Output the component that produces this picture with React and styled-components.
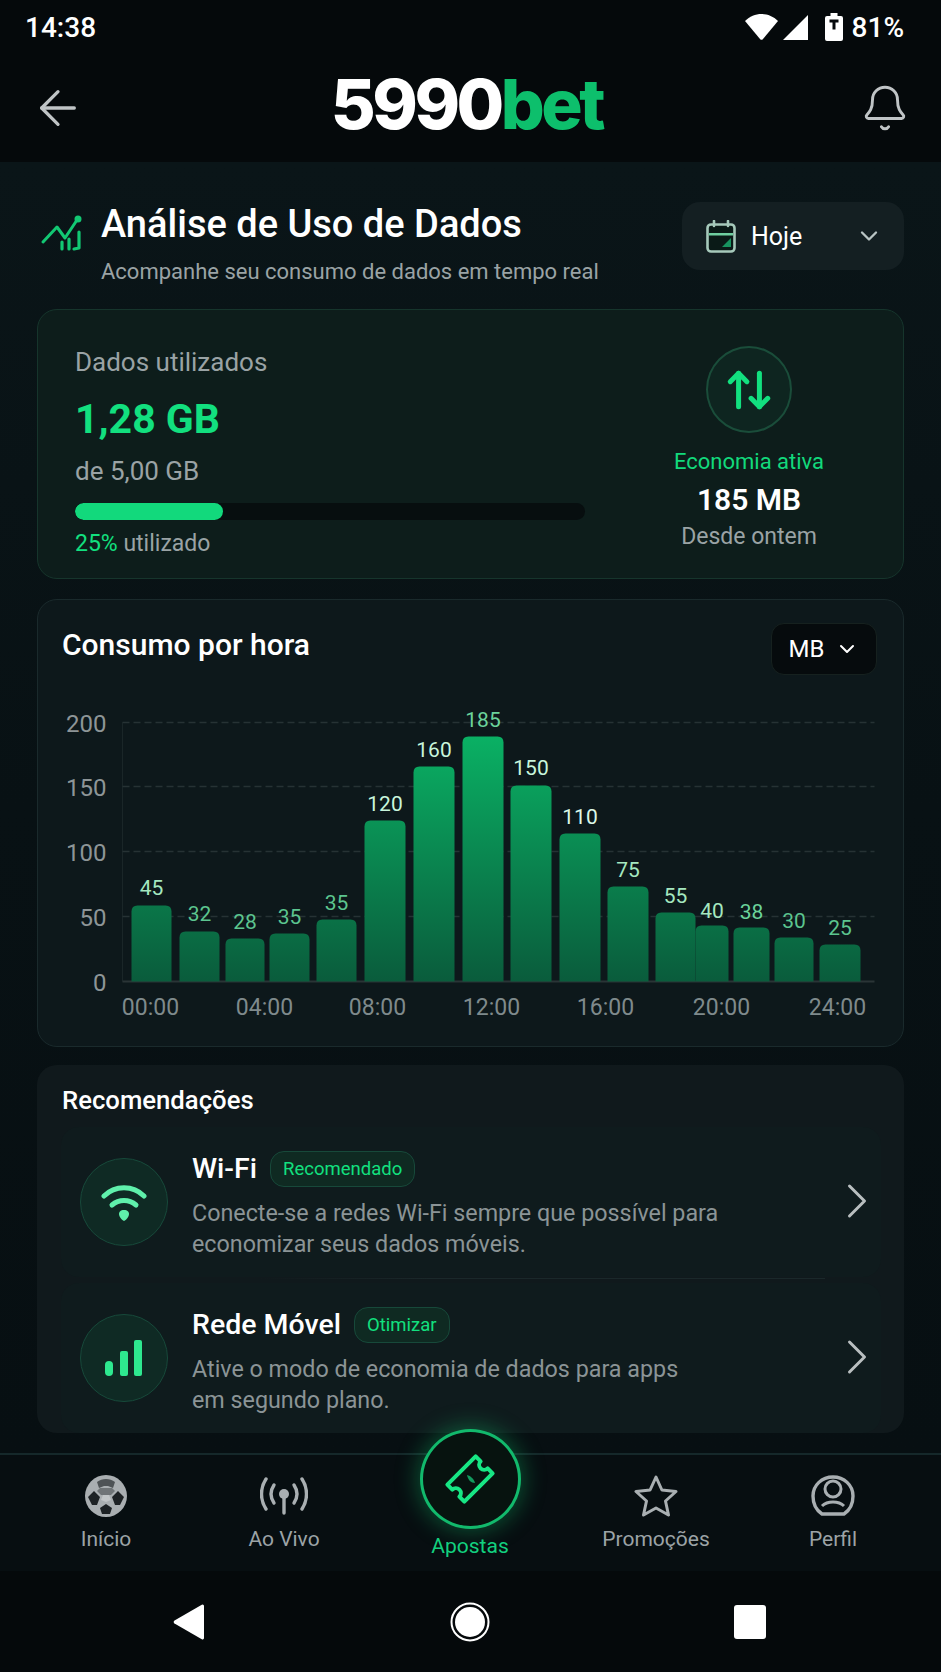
import React from 'react';
import styled, { createGlobalStyle } from 'styled-components';
import { ChevronDown, ChevronRight, ArrowLeft, Bell, ArrowUpDown } from 'lucide-react';

const Global = createGlobalStyle`
  html, body { margin: 0; padding: 0; background: #05090b; }
  * { box-sizing: border-box; }
  #root { width: 941px; height: 1672px; overflow: hidden; }
`;

const Screen = styled.div`
  width: 941px; height: 1672px; display: flex; flex-direction: column;
  font-family: Roboto, "Liberation Sans", sans-serif; color: #fff; background: #05090b;
`;
const StatusBar = styled.div`
  flex: none; height: 54px; display: flex; align-items: center; justify-content: space-between;
  padding: 0 37px 0 25px; font-size: 28px; font-weight: 500; color: #fff; background: #05090b;
`;
const StatusIcons = styled.div`display: flex; align-items: center;`;
const StatusSlot = styled.span`display: flex; margin-right: ${p => p.$mr}px;`;
const AppBar = styled.div`
  flex: none; height: 108px; display: flex; align-items: center; justify-content: space-between;
  padding: 0 31px 0 30px; background: #05090b;
`;
const Logo = styled.div`
  font-family: Inter, sans-serif; font-weight: 800; font-size: 69px; letter-spacing: -3.5px; line-height: 1; color: #fff;
  margin: -8px 13px 0 0;
`;
const LogoAccent = styled.span`color: #0dbf6c;`;
const Content = styled.main`
  flex: none; height: 1291px; padding: 0 37px; display: flex; flex-direction: column;
  background: linear-gradient(180deg, #0a1518 0%, #081114 50%, #070f12 100%);
`;
const PageHead = styled.div`
  flex: none; height: 147px; display: flex; justify-content: space-between; padding-top: 40px;
`;
const HeadLeft = styled.div`display: flex; gap: 17px; margin-left: 3px;`;
const TrendSlot = styled.span`display: block; margin-top: 13px;`;
const PageTitle = styled.h1`margin: 0; font-size: 38px; font-weight: 500; line-height: 44px;`;
const PageSub = styled.p`margin: 11px 0 0; font-size: 22px; line-height: 30px; color: #9aa3a5;`;
const PeriodSelect = styled.div`
  width: 222px; height: 68px; background: #141f22; border-radius: 18px; display: flex; align-items: center;
  padding: 0 21px 0 24px; font-size: 25px; gap: 15px;
`;
const Spacer = styled.span`flex: 1;`;
const UsageCard = styled.section`
  flex: none; height: 270px; border: 1.5px solid #16352c; border-radius: 20px; background: #0d1d1b;
  display: flex; padding: 32px 38px 0 37px; margin-bottom: 20px;
`;
const UsageLeft = styled.div`width: 510px; display: flex; flex-direction: column;`;
const UsageLabel = styled.div`font-size: 26px; line-height: 40px; color: #9aa3a5;`;
const UsageValue = styled.div`font-size: 41px; font-weight: 700; line-height: 50px; color: #12e07f; margin-top: 12px;`;
const UsageOf = styled.div`font-size: 26px; line-height: 34px; color: #9aa3a5; margin-top: 10px;`;
const Track = styled.div`height: 17px; border-radius: 9px; background: #070e0f; margin-top: 15px; overflow: hidden;`;
const Fill = styled.div`height: 100%; border-radius: 9px; background: #12d97c;`;
const UsagePct = styled.div`font-size: 23px; line-height: 30px; color: #9aa3a5; margin-top: 9px;`;
const Green = styled.span`color: #12e07f;`;
const UsageRight = styled.div`flex: 1; display: flex; flex-direction: column; align-items: center; padding-left: 48px; margin-top: 4px;`;
const SaveCircle = styled.div`
  width: 86px; height: 87px; border-radius: 50%; border: 2px solid #1a4d3a; background: #0e2520; display: flex; align-items: center; justify-content: center; color: #12e07f;
`;
const SaveLabel = styled.div`font-size: 22px; line-height: 30px; color: #12d97c; margin-top: 14px; white-space: nowrap;`;
const SaveValue = styled.div`font-size: 30px; font-weight: 600; line-height: 34px; color: #fff; margin-top: 6px; white-space: nowrap;`;
const SaveNote = styled.div`font-size: 23px; line-height: 30px; color: #9aa3a5; margin-top: 5px; white-space: nowrap;`;

const ChartCard = styled.section`
  flex: none; height: 448px; border: 1.5px solid #1a2a2c; border-radius: 20px; background: #0d181b; margin-bottom: 18px;
  display: flex; flex-direction: column;
`;
const ChartHead = styled.div`
  flex: none; display: flex; justify-content: space-between; align-items: flex-start; padding: 23px 26px 0 24px;
`;
const CardTitle = styled.h2`margin: 2px 0 0; font-size: 30px; font-weight: 500; line-height: 40px;`;
const UnitSelect = styled.div`
  width: 106px; height: 52px; border-radius: 13px; background: #060b0d; border: 1px solid #16211f;
  display: flex; align-items: center; justify-content: center; gap: 11px; font-size: 24px;
`;
const ChartSvg = styled.svg`display: block; flex: none; font-family: Roboto, sans-serif;`;

const RecCard = styled.section`
  flex: none; height: 368px; border-radius: 20px; background: #10191c; display: flex; flex-direction: column; padding: 15px 23px 0 24px;
`;
const RecTitle = styled.h2`margin: 0 0 0 1px; font-size: 25.7px; font-weight: 500; line-height: 40px;`;
const RecRow = styled.div`
  flex: none; height: 150px; display: flex; align-items: center; padding: 0 6px 0 19px; border-radius: 18px; background: #0f1b1d;
  margin-top: ${p => p.$mt}px;
`;
const RecDivider = styled.div`
  flex: none; height: 1px; margin: 1px 56px 0 200px; background: linear-gradient(90deg, #1a282a00, #1a282a 30%, #1a282a);
`;
const RecIcon = styled.div`
  width: 88px; height: 88px; flex: none; border-radius: 50%; border: 1.5px solid #17493a; background: #0f2a24; display: flex; align-items: center; justify-content: center;
`;
const RecBody = styled.div`flex: 1; margin-left: 24px; margin-top: 6px;`;
const RecHeadRow = styled.div`display: flex; align-items: center; gap: 13px; height: 36px;`;
const RecName = styled.div`font-size: 28.5px; font-weight: 500;`;
const Chip = styled.span`
  height: 36px; display: inline-flex; align-items: center; padding: 0 12px; border: 1.5px solid #17493a; border-radius: 14px;
  background: #0f2a22; color: #12e07f; font-size: 18.5px;
`;
const RecText = styled.p`margin: 11px 0 0; font-size: 23.3px; line-height: 31px; color: #8b9496;`;
const RecChevron = styled.div`flex: none; width: 60px; margin: -3px -12px 0; display: flex; justify-content: center; color: #b9bfc0;`;

const BottomNav = styled.nav`
  flex: none; height: 118px; border-top: 2px solid #15282a; background: #070e11; display: grid;
  grid-template-columns: 184px 172px 200px 172px 182px; padding-left: 14px;
`;
const NavItem = styled.div`
  display: flex; flex-direction: column; align-items: center; font-size: 21px; padding-top: 19px;
`;
const NavIconBox = styled.div`height: 44px; display: flex; align-items: center; justify-content: center;`;
const NavLabel = styled.div`line-height: 30px; margin-top: 6px; color: #9ca3a6;`;
const CenterItem = styled.div`
  display: flex; flex-direction: column; align-items: center; margin-top: -26px; position: relative;
`;
const CenterCircle = styled.div`
  width: 101px; height: 100px; flex: none; border-radius: 50%; border: 3px solid #12b96c; background: #07130f;
  box-shadow: 0 0 22px 3px rgba(18,200,110,.35); display: flex; align-items: center; justify-content: center;
`;
const CenterLabel = styled.div`font-size: 21px; line-height: 30px; color: #12d07f; margin-top: 2px;`;
const SystemNav = styled.div`
  flex: 1; display: flex; align-items: center; justify-content: space-between; padding: 0 175px 0 173px; background: #05090b;
`;

const gridY = [[200, 723], [150, 787], [100, 852], [50, 917], [0, 982]];
const bars = [
  [132, 172, 906, 45, 888, '#a5e8c0'], [180, 220, 932, 32, 914, '#5cc58f'], [226, 265, 939, 28, 922, '#5cc58f'],
  [270, 310, 934, 35, 917, '#5cc58f'], [317, 357, 920, 35, 903, '#5cc58f'], [365, 406, 821, 120, 804, '#c8f5dc'],
  [414, 455, 767, 160, 750, '#c8f5dc'], [463, 504, 737, 185, 720, '#6bd39b'], [511, 552, 786, 150, 768, '#c8f5dc'],
  [560, 601, 834, 110, 817, '#dcf8e8'], [608, 649, 887, 75, 870, '#a5e8c0'], [656, 696, 913, 55, 896, '#a5e8c0'],
  [696, 729, 926, 40, 911, '#a5e8c0'], [734, 770, 928, 38, 912, '#6bd39b'], [775, 814, 938, 30, 921, '#5cc58f'],
  [820, 861, 945, 25, 928, '#5cc58f'],
];
const xLabels = [['00:00', 151], ['04:00', 265], ['08:00', 378], ['12:00', 492], ['16:00', 606], ['20:00', 722], ['24:00', 838]];

function Chart() {
  const ox = 38.5, oy = 675.5;
  return (
    <ChartSvg width="863" height="370" viewBox={`${ox} ${oy} 863 370`}>
      <defs>
        <linearGradient id="bar" x1="0" y1="723" x2="0" y2="982" gradientUnits="userSpaceOnUse">
          <stop offset="0" stopColor="#0ab566" />
          <stop offset="1" stopColor="#0a5c3c" />
        </linearGradient>
      </defs>
      <line x1="123" y1="723" x2="123" y2="982" stroke="#1a2628" strokeWidth="1" />
      {gridY.map(([v, y]) => (
        <g key={v}>
          <line x1="123" x2="875" y1={y} y2={y} stroke={v === 0 ? '#2a3436' : '#263234'} strokeWidth={v === 0 ? 2 : 1.5} strokeDasharray={v === 0 ? '' : '7 4'} />
          <text x="107" y={y + 9} textAnchor="end" fontSize="24" fill="#8d9597">{v}</text>
        </g>
      ))}
      {bars.map(([a, b, t, v, ly, c], i) => (
        <g key={i}>
          <path d={`M${a} 982V${t + 6}Q${a} ${t} ${a + 6} ${t}H${b - 6}Q${b} ${t} ${b} ${t + 6}V982Z`} fill="url(#bar)" />
          <text x={(a + b) / 2} y={ly + 7} textAnchor="middle" fontSize="21" fill={c}>{v}</text>
        </g>
      ))}
      {xLabels.map(([l, x]) => (
        <text key={l} x={x} y="1015" textAnchor="middle" fontSize="23" fill="#7f8a8c">{l}</text>
      ))}
    </ChartSvg>
  );
}

const WifiStatus = () => (
  <svg width="33" height="26" viewBox="0 0 33 26"><path d="M0 7C4.500 2.500 10.500 0 16.500 0S28.500 2.500 33 7L18 25a2 2 0 0 1-3 0Z" fill="#fff" /></svg>
);
const SignalStatus = () => (
  <svg width="25" height="26" viewBox="0 0 25 26"><path d="M25 1v25H0Z" fill="#fff" /></svg>
);
const BatteryStatus = () => (
  <svg width="18" height="28" viewBox="0 0 18 28"><path d="M5.500 0h7v3H16a2 2 0 0 1 2 2v21a2 2 0 0 1-2 2H2a2 2 0 0 1-2-2V5a2 2 0 0 1 2-2h3.500Z" fill="#fff" /><path d="M4.500 6.500h9v3h-3v7h-3v-7h-3Z" fill="#05090b" /></svg>
);
const TrendIcon = () => (
  <svg width="44" height="38" viewBox="10 10 44 38" fill="none" stroke="#12c873" strokeLinecap="round" strokeLinejoin="round">
    <path d="M13 37 27 22l8 11 12-18" strokeWidth="3" />
    <circle cx="48" cy="14" r="3.500" fill="#12c873" stroke="none" />
    <path d="M32 37v7M39 34v10M49 27v16l-5 1" strokeWidth="3.200" />
  </svg>
);
const CalendarIcon = () => (
  <svg width="30" height="33" viewBox="0 0 30 33" fill="none">
    <rect x="1.500" y="4.500" width="27" height="27" rx="3.500" fill="#0a1a17" stroke="#a6c9bb" strokeWidth="2.600" />
    <path d="M8 1v5M22 1v5" stroke="#a6c9bb" strokeWidth="2.600" strokeLinecap="round" />
    <rect x="3" y="13" width="24" height="2.500" fill="#6fcfa0" />
    <path d="M25 18v9H16Z" fill="#17935f" />
  </svg>
);
const WifiGreen = () => (
  <svg width="46" height="38" viewBox="0 0 46 38" fill="none" stroke="#5ff0ab" strokeWidth="5">
    <path d="M3 13C14 2 32 2 43 13" strokeLinecap="round" />
    <path d="M11 22c7-6 17-6 24 0" strokeLinecap="round" />
    <path d="M23 27c3.500 0 5 2 5 4 0 3-3 6-5 7-2-1-5-4-5-7 0-2 1.500-4 5-4Z" fill="#5ff0ab" stroke="none" />
  </svg>
);
const BarsGreen = () => (
  <svg width="40" height="36" viewBox="0 0 40 36" fill="#2ee88f">
    <rect x="1" y="21" width="8" height="15" rx="4" />
    <rect x="16" y="11" width="8" height="25" rx="2" />
    <rect x="30" y="0" width="8" height="36" rx="2" />
  </svg>
);
const BallIcon = () => (
  <svg width="42" height="42" viewBox="0 0 42 42">
    <circle cx="21" cy="21" r="21" fill="#a9aeb1" />
    <path d="M12 7c5-4 13-4 18 0l-2 6-5-2h-4l-5 2Z" fill="#4e5356" />
    <path d="M15 13h12l3 3-4 4H16l-4-4Z" fill="#6f7477" />
    <path d="M3 22l6-6 6 6-3 8H7ZM39 22l-6-6-6 6 3 8h5ZM15 33l6-4 6 4-2 6h-8Z" fill="#1d2225" />
    <path d="M18 20h6l2 5-5 2-5-2Z" fill="#c1c5c7" />
  </svg>
);
const LiveIcon = () => (
  <svg width="48" height="38" viewBox="0 0 48 38" fill="none" stroke="#a9afb2" strokeWidth="3.400" strokeLinecap="round">
    <path d="M6 2C0 11 0 23 6 32M42 2c6 9 6 21 0 30" />
    <path d="M14 8c-4 6-4 12 0 18M34 8c4 6 4 12 0 18" />
    <path d="M24 18v18" />
    <circle cx="24" cy="17" r="5" fill="#a9afb2" stroke="none" />
  </svg>
);
const TicketIcon = () => (
  <svg width="56" height="56" viewBox="-28 -28 56 56" fill="none">
    <path transform="rotate(-45)" d="M-20-12H20V-5A5 5 0 0 0 20 5V12H-20V5A5 5 0 0 0-20-5Z" stroke="#17e684" strokeWidth="4" strokeLinejoin="round" />
    <path d="M-3-4C1-3 4 0 5 4 1 4-2 1-3-4Z" fill="#129a5e" />
  </svg>
);
const StarIcon = () => (
  <svg width="44" height="42" viewBox="0 0 44 42" fill="none" stroke="#a9afb2" strokeWidth="3" strokeLinejoin="round">
    <path d="M22 2 27.900 15 42 16.500 31.500 26 34.500 40 22 33 9.500 40 12.500 26 2 16.500 16.100 15Z" />
  </svg>
);
const PersonIcon = () => (
  <svg width="44" height="42" viewBox="0 0 44 42" fill="none" stroke="#a9afb2">
    <path d="M11 39C5 35 2 28 2 21 2 10 11 2 22 2s20 8 20 19c0 7-3 14-9 18Z" strokeWidth="3.400" strokeLinejoin="round" />
    <circle cx="22" cy="14" r="8" strokeWidth="3" />
    <path d="M11 31c3-3 7-4 11-4s8 1 11 4" strokeWidth="3" />
  </svg>
);

const recs = [
  { name: 'Wi-Fi', chip: 'Recomendado', icon: <WifiGreen />, lines: ['Conecte-se a redes Wi-Fi sempre que possível para', 'economizar seus dados móveis.'] },
  { name: 'Rede Móvel', chip: 'Otimizar', icon: <BarsGreen />, lines: ['Ative o modo de economia de dados para apps', 'em segundo plano.'] },
];

export default function App() {
  return (
    <Screen>
      <Global />
      <StatusBar>
        <span>14:38</span>
        <StatusIcons>
          <StatusSlot $mr={5}><WifiStatus /></StatusSlot>
          <StatusSlot $mr={17}><SignalStatus /></StatusSlot>
          <StatusSlot $mr={9}><BatteryStatus /></StatusSlot>
          81%
        </StatusIcons>
      </StatusBar>
      <AppBar>
        <ArrowLeft size={56} strokeWidth={1.4} color="#c0c4c6" />
        <Logo>5990<LogoAccent>bet</LogoAccent></Logo>
        <Bell size={50} strokeWidth={1.4} color="#c0c4c6" />
      </AppBar>
      <Content>
        <PageHead>
          <HeadLeft>
            <TrendSlot><TrendIcon /></TrendSlot>
            <div>
              <PageTitle>Análise de Uso de Dados</PageTitle>
              <PageSub>Acompanhe seu consumo de dados em tempo real</PageSub>
            </div>
          </HeadLeft>
          <PeriodSelect>
            <CalendarIcon />
            Hoje
            <Spacer />
            <ChevronDown size={28} color="#b9c4c4" />
          </PeriodSelect>
        </PageHead>
        <UsageCard>
          <UsageLeft>
            <UsageLabel>Dados utilizados</UsageLabel>
            <UsageValue>1,28 GB</UsageValue>
            <UsageOf>de 5,00 GB</UsageOf>
            <Track><Fill style={{ width: '29%' }} /></Track>
            <UsagePct><Green>25%</Green> utilizado</UsagePct>
          </UsageLeft>
          <UsageRight>
            <SaveCircle><ArrowUpDown size={50} strokeWidth={2.4} /></SaveCircle>
            <SaveLabel>Economia ativa</SaveLabel>
            <SaveValue>185 MB</SaveValue>
            <SaveNote>Desde ontem</SaveNote>
          </UsageRight>
        </UsageCard>
        <ChartCard>
          <ChartHead>
            <CardTitle>Consumo por hora</CardTitle>
            <UnitSelect>MB <ChevronDown size={24} /></UnitSelect>
          </ChartHead>
          <Chart />
        </ChartCard>
        <RecCard>
          <RecTitle>Recomendações</RecTitle>
          {recs.map((r, i) => (
            <React.Fragment key={r.name}>
              {i > 0 && <RecDivider />}
              <RecRow $mt={i === 0 ? 7 : 4}>
                <RecIcon>{r.icon}</RecIcon>
                <RecBody>
                  <RecHeadRow><RecName>{r.name}</RecName><Chip>{r.chip}</Chip></RecHeadRow>
                  <RecText>{r.lines[0]}<br />{r.lines[1]}</RecText>
                </RecBody>
                <RecChevron><ChevronRight size={60} strokeWidth={1.2} /></RecChevron>
              </RecRow>
            </React.Fragment>
          ))}
        </RecCard>
      </Content>
      <BottomNav>
        <NavItem><NavIconBox><BallIcon /></NavIconBox><NavLabel>Início</NavLabel></NavItem>
        <NavItem><NavIconBox><LiveIcon /></NavIconBox><NavLabel>Ao Vivo</NavLabel></NavItem>
        <CenterItem>
          <CenterCircle><TicketIcon /></CenterCircle>
          <CenterLabel>Apostas</CenterLabel>
        </CenterItem>
        <NavItem><NavIconBox><StarIcon /></NavIconBox><NavLabel>Promoções</NavLabel></NavItem>
        <NavItem><NavIconBox><PersonIcon /></NavIconBox><NavLabel>Perfil</NavLabel></NavItem>
      </BottomNav>
      <SystemNav>
        <svg width="32" height="36" viewBox="0 0 32 36"><path d="M31 2v32a1.500 1.500 0 0 1-2.200 1.300L1.500 19.500a2 2 0 0 1 0-3L28.800.7A1.500 1.500 0 0 1 31 2Z" fill="#fff" /></svg>
        <svg width="40" height="40" viewBox="0 0 40 40"><circle cx="20" cy="20" r="18.500" fill="none" stroke="#fff" strokeWidth="2" /><circle cx="20" cy="20" r="15" fill="#fff" /></svg>
        <svg width="32" height="34" viewBox="0 0 32 34"><rect width="32" height="34" rx="3" fill="#fff" /></svg>
      </SystemNav>
    </Screen>
  );
}
